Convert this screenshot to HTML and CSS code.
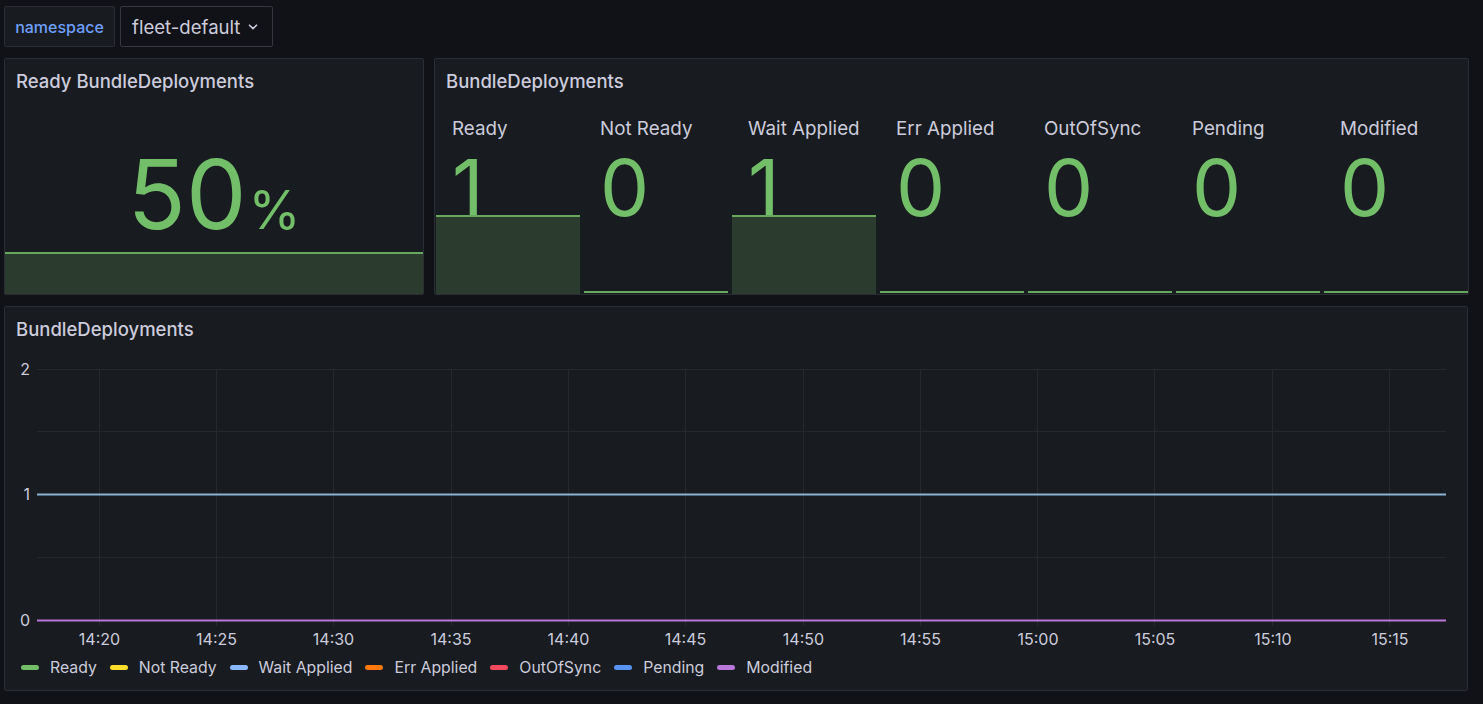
FILE: index.html
```html
<!DOCTYPE html>
<html>
<head>
<meta charset="utf-8">
<link rel="stylesheet" href="styles.css">
</head>
<body>
<div class="page">
  <div class="toolbar">
    <div class="var-label">namespace</div>
    <div class="var-select">fleet-default
      <svg class="chev" width="10" height="6" viewBox="0 0 10 6"><path d="M1.5 1.2 L5 4.6 L8.5 1.2" fill="none" stroke="#ccccdc" stroke-width="1.6" stroke-linecap="round" stroke-linejoin="round"/></svg>
    </div>
  </div>

  <div class="row-top">
    <div class="panel panel-ready">
      <div class="panel-title">Ready BundleDeployments</div>
      <div class="big-stat">
        <div class="big-value">50<span class="unit">%</span></div>
        <div class="spark-fill big-spark"></div>
      </div>
    </div>

    <div class="panel panel-bundles">
      <div class="panel-title">BundleDeployments</div>
      <div class="stat-grid">
        <div class="stat-item"><div class="stat-label">Ready</div><div class="stat-value">1</div><div class="spark-fill item-spark"></div></div>
        <div class="stat-item"><div class="stat-label">Not Ready</div><div class="stat-value">0</div><div class="spark-line"></div></div>
        <div class="stat-item"><div class="stat-label">Wait Applied</div><div class="stat-value">1</div><div class="spark-fill item-spark"></div></div>
        <div class="stat-item"><div class="stat-label">Err Applied</div><div class="stat-value">0</div><div class="spark-line"></div></div>
        <div class="stat-item"><div class="stat-label">OutOfSync</div><div class="stat-value">0</div><div class="spark-line"></div></div>
        <div class="stat-item"><div class="stat-label">Pending</div><div class="stat-value">0</div><div class="spark-line"></div></div>
        <div class="stat-item"><div class="stat-label">Modified</div><div class="stat-value">0</div><div class="spark-line"></div></div>
      </div>
    </div>
  </div>

  <div class="panel panel-graph">
    <div class="panel-title">BundleDeployments</div>
    <svg class="chart" width="1462" height="300" viewBox="0 0 1462 300">
      <g stroke="#26282d" stroke-width="1">
        <line x1="32" y1="19.5" x2="1441" y2="19.5"/>
        <line x1="32" y1="81.5" x2="1441" y2="81.5"/>
        <line x1="32" y1="144.5" x2="1441" y2="144.5"/>
        <line x1="32" y1="207.5" x2="1441" y2="207.5"/>
        <line x1="32" y1="270.5" x2="1441" y2="270.5"/>
        <line x1="94.5" y1="19" x2="94.5" y2="276"/>
        <line x1="211.5" y1="19" x2="211.5" y2="276"/>
        <line x1="328.5" y1="19" x2="328.5" y2="276"/>
        <line x1="446.5" y1="19" x2="446.5" y2="276"/>
        <line x1="563.5" y1="19" x2="563.5" y2="276"/>
        <line x1="680.5" y1="19" x2="680.5" y2="276"/>
        <line x1="798.5" y1="19" x2="798.5" y2="276"/>
        <line x1="915.5" y1="19" x2="915.5" y2="276"/>
        <line x1="1032.5" y1="19" x2="1032.5" y2="276"/>
        <line x1="1149.5" y1="19" x2="1149.5" y2="276"/>
        <line x1="1267.5" y1="19" x2="1267.5" y2="276"/>
        <line x1="1384.5" y1="19" x2="1384.5" y2="276"/>
      </g>
      <g class="axis-text" text-anchor="end">
        <text x="25" y="25">2</text>
        <text x="25" y="150">1</text>
        <text x="25" y="276">0</text>
      </g>
      <g class="axis-text" text-anchor="middle">
        <text x="94.5" y="295">14:20</text>
        <text x="211.5" y="295">14:25</text>
        <text x="328.5" y="295">14:30</text>
        <text x="446" y="295">14:35</text>
        <text x="563.5" y="295">14:40</text>
        <text x="680.5" y="295">14:45</text>
        <text x="798.5" y="295">14:50</text>
        <text x="915.5" y="295">14:55</text>
        <text x="1033" y="295">15:00</text>
        <text x="1150" y="295">15:05</text>
        <text x="1268" y="295">15:10</text>
        <text x="1385" y="295">15:15</text>
      </g>
      <line x1="32" y1="144.5" x2="1441" y2="144.5" stroke="#8ab3d4" stroke-width="2"/>
      <line x1="32" y1="270.5" x2="1441" y2="270.5" stroke="#b877d9" stroke-width="2"/>
    </svg>
    <div class="legend">
      <div class="legend-item"><span class="mark c-ready"></span>Ready</div>
      <div class="legend-item"><span class="mark c-notready"></span>Not Ready</div>
      <div class="legend-item"><span class="mark c-wait"></span>Wait Applied</div>
      <div class="legend-item"><span class="mark c-err"></span>Err Applied</div>
      <div class="legend-item"><span class="mark c-oos"></span>OutOfSync</div>
      <div class="legend-item"><span class="mark c-pending"></span>Pending</div>
      <div class="legend-item"><span class="mark c-mod"></span>Modified</div>
    </div>
  </div>
</div>
</body>
</html>
```

FILE: styles.css
```css
html, body {
  margin: 0;
  padding: 0;
  background: #111217;
  font-family: Inter, "Noto Sans", sans-serif;
  color: #ccccdc;
}

.page {
  width: 1465px;
  padding: 6px 0 0 4px;
}

.toolbar {
  display: flex;
  gap: 5px;
  height: 41px;
}

.var-label {
  box-sizing: border-box;
  height: 41px;
  width: 111px;
  display: flex;
  align-items: center;
  justify-content: center;
  background: #181b1f;
  border: 1px solid #2a2d33;
  border-radius: 2px;
  color: #6e9fff;
  font-size: 16px;
  font-weight: 500;
}

.var-select {
  box-sizing: border-box;
  height: 41px;
  width: 153px;
  display: flex;
  align-items: center;
  padding-left: 11px;
  gap: 8px;
  background: #111217;
  border: 1px solid #34373d;
  border-radius: 2px;
  color: #ccccdc;
  font-size: 18.6px;
}

.chev {
  margin-top: 1px;
}

.row-top {
  display: flex;
  gap: 10px;
  margin-top: 11px;
  height: 237px;
}

.panel {
  box-sizing: border-box;
  background: #181b1f;
  border: 1px solid #2a2d33;
  border-radius: 2px;
  display: flex;
  flex-direction: column;
}

.panel-title {
  height: 43px;
  display: flex;
  align-items: center;
  padding-left: 11px;
  font-size: 18.5px;
  font-weight: 500;
  color: #ccccdc;
  flex: none;
}

.panel-ready {
  width: 420px;
}

.big-stat {
  flex: 1;
  display: flex;
  flex-direction: column;
  justify-content: flex-end;
}

.big-value {
  text-align: center;
  color: #73bf69;
  font-size: 96px;
  line-height: 96px;
  font-weight: 400;
  margin-bottom: -6px;
  padding-left: 0;
}

.unit {
  font-size: 53px;
  margin-left: 2px;
}

.spark-fill {
  background: #2b3c2e;
  border-top: 2px solid #66a95e;
  flex: none;
}

.big-spark {
  height: 40px;
  margin: 0;
}

.panel-bundles {
  flex: 1;
  width: 1035px;
}

.stat-grid {
  flex: 1;
  display: grid;
  grid-template-columns: repeat(7, 144px);
  gap: 4px;
  padding-left: 1px;
}

.stat-item {
  display: flex;
  flex-direction: column;
}

.stat-label {
  font-size: 18.8px;
  height: 26px;
  line-height: 26px;
  padding-left: 16px;
  margin-top: 14px;
  color: #ccccdc;
}

.stat-value {
  font-size: 78px;
  line-height: 91px;
  height: 73px;
  color: #73bf69;
  padding-left: 16px;
}

.item-spark {
  flex: 1;
}

.spark-line {
  margin-top: auto;
  height: 2px;
  background: #66a95e;
  margin-bottom: 1px;
}

.panel-graph {
  margin-top: 11px;
  width: 1464px;
  height: 385px;
}

.chart {
  display: block;
  flex: none;
}

.axis-text {
  fill: #ccccdc;
  font-family: Inter, "Noto Sans", sans-serif;
  font-size: 16px;
}

.legend {
  display: flex;
  align-items: center;
  height: 34px;
  padding-left: 16px;
  gap: 13px;
}

.legend-item {
  display: flex;
  align-items: center;
  gap: 11px;
  font-size: 15.8px;
  color: #ccccdc;
}

.mark {
  width: 18px;
  height: 5px;
  border-radius: 3px;
  display: inline-block;
}

.c-ready { background: #73bf69; }
.c-notready { background: #fade2a; }
.c-wait { background: #8ab8ff; }
.c-err { background: #ff780a; }
.c-oos { background: #f2495c; }
.c-pending { background: #5794f2; }
.c-mod { background: #b877d9; }
```
